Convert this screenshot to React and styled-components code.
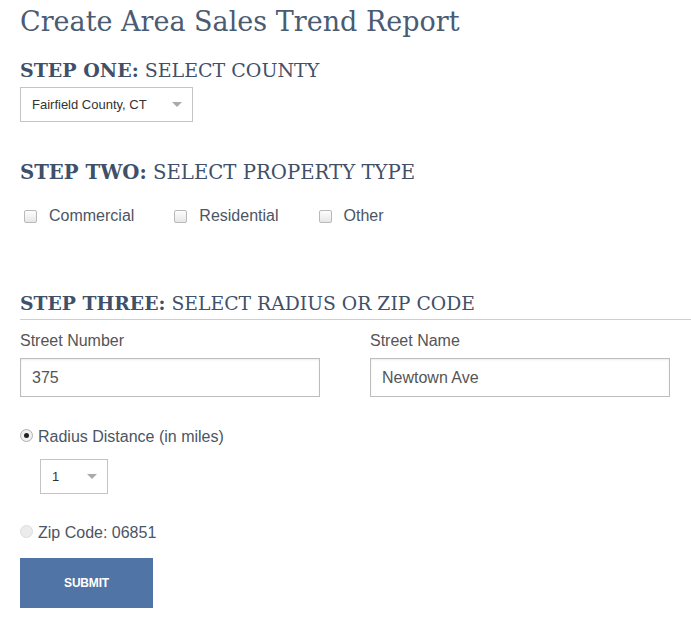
import React from "react";
import styled, { createGlobalStyle } from "styled-components";

const GlobalStyle = createGlobalStyle`
  body {
    margin: 0;
    background: #fff;
    font-family: "Liberation Sans", Arial, sans-serif;
  }
`;

const Page = styled.div`
  padding: 4px 0 0 20px;
  width: 671px;
  overflow: hidden;
`;

const Title = styled.h1`
  margin: 0;
  font-family: "DejaVu Serif", serif;
  font-weight: 400;
  font-size: 27px;
  line-height: 36px;
  color: #4a5b72;
`;

const StepHeading = styled.h2`
  margin: ${(p) => p.$top || 0}px 0 0;
  font-family: "DejaVu Serif", serif;
  font-weight: 400;
  font-size: ${(p) => p.$size || 19}px;
  line-height: 26px;
  color: #3f5068;
  b {
    font-weight: 700;
  }
`;

const Rule = styled.hr`
  margin: 2px 0 0;
  border: 0;
  border-top: 1px solid #cfcfcf;
  width: 700px;
`;

const SelectBox = styled.div`
  margin: ${(p) => p.$top || 0}px 0 0 ${(p) => p.$left || 0}px;
  width: ${(p) => p.$width}px;
  height: 35px;
  box-sizing: border-box;
  border: 1px solid #c4c4c4;
  display: flex;
  align-items: center;
  justify-content: space-between;
  padding: 0 10px 0 11px;
  font-size: 13px;
  color: #333;
`;

const Caret = styled.span`
  width: 0;
  height: 0;
  border-left: 5px solid transparent;
  border-right: 5px solid transparent;
  border-top: 5px solid #aaa;
`;

const CheckRow = styled.div`
  display: flex;
  margin-top: 21px;
  gap: 36px;
`;

const CheckItem = styled.label`
  display: flex;
  align-items: center;
  gap: 12px;
  font-size: 16px;
  color: #4b5564;
`;

const Box = styled.span`
  width: 11px;
  height: 11px;
  border: 1px solid #b9b9b9;
  border-radius: 2px;
  background: linear-gradient(#fdfdfd, #e6e6e6);
  margin-left: 4px;
`;

const FieldRow = styled.div`
  display: grid;
  grid-template-columns: 300px 300px;
  column-gap: 50px;
  margin-top: 12px;
`;

const Field = styled.div`
  display: flex;
  flex-direction: column;
`;

const Label = styled.span`
  font-size: 16px;
  color: #555;
  line-height: 18px;
  margin-bottom: 8px;
`;

const TextInput = styled.div`
  height: 39px;
  box-sizing: border-box;
  border: 1px solid #bdbdbd;
  box-shadow: inset 0 1px 2px rgba(0, 0, 0, 0.08);
  display: flex;
  align-items: center;
  padding: 0 11px;
  font-size: 16px;
  color: #555;
`;

const RadioRow = styled.label`
  display: flex;
  align-items: center;
  gap: 5px;
  margin-top: ${(p) => p.$top}px;
  font-size: 16px;
  color: #4b5564;
`;

const Radio = styled.span`
  width: 11px;
  height: 11px;
  border-radius: 50%;
  border: 1px solid ${(p) => (p.$checked ? "#b0b0b0" : "#dcdcdc")};
  background: ${(p) => (p.$checked ? "#f0f0f0" : "#ececec")};
  position: relative;
  top: -2px;
  &::after {
    content: "";
    display: ${(p) => (p.$checked ? "block" : "none")};
    position: absolute;
    left: 3px;
    top: 3px;
    width: 5px;
    height: 5px;
    border-radius: 50%;
    background: #222;
  }
`;

const Submit = styled.button`
  margin-top: 16px;
  width: 133px;
  height: 50px;
  border: 0;
  background: #5174a6;
  color: #fff;
  font-family: "Liberation Sans", Arial, sans-serif;
  font-weight: 700;
  font-size: 12px;
  letter-spacing: -0.2px;
`;

export default function App() {
  return (
    <>
      <GlobalStyle />
      <Page>
        <Title>Create Area Sales Trend Report</Title>
        <StepHeading $top={17}>
          <b>STEP ONE:</b> SELECT COUNTY
        </StepHeading>
        <SelectBox $width={173} $top={4}>
          Fairfield County, CT
          <Caret />
        </SelectBox>

        <StepHeading $top={38} $size={19.7}>
          <b>STEP TWO:</b> SELECT PROPERTY TYPE
        </StepHeading>
        <CheckRow>
          {["Commercial", "Residential", "Other"].map((t) => (
            <CheckItem key={t}>
              <Box />
              {t}
            </CheckItem>
          ))}
        </CheckRow>

        <StepHeading $top={65} $size={18.8}>
          <b>STEP THREE:</b> SELECT RADIUS OR ZIP CODE
        </StepHeading>
        <Rule />
        <FieldRow>
          <Field>
            <Label>Street Number</Label>
            <TextInput>375</TextInput>
          </Field>
          <Field>
            <Label>Street Name</Label>
            <TextInput>Newtown Ave</TextInput>
          </Field>
        </FieldRow>

        <RadioRow $top={31}>
          <Radio $checked />
          Radius Distance (in miles)
        </RadioRow>
        <SelectBox $width={68} $top={13} $left={20}>
          1
          <Caret />
        </SelectBox>
        <RadioRow $top={30}>
          <Radio />
          Zip Code: 06851
        </RadioRow>
        <Submit>SUBMIT</Submit>
      </Page>
    </>
  );
}
